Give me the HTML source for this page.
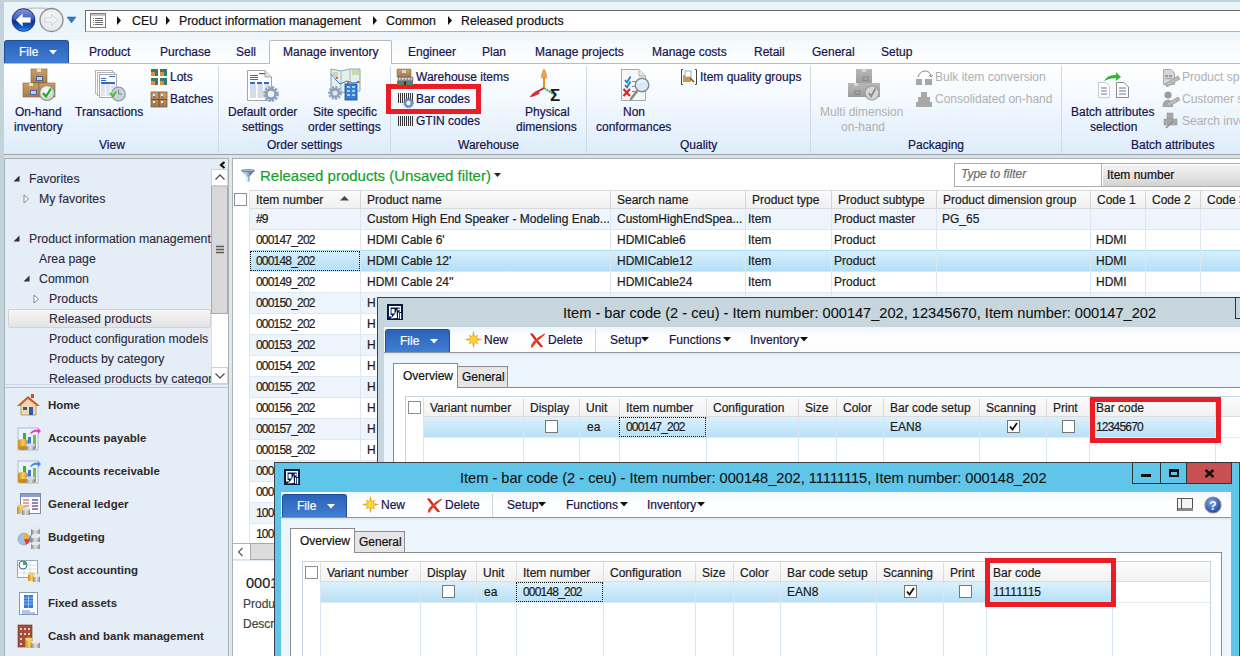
<!DOCTYPE html>
<html><head><meta charset="utf-8">
<style>
*{box-sizing:border-box}
html,body{margin:0;padding:0}
body{width:1240px;height:656px;overflow:hidden;position:relative;font-family:"Liberation Sans",sans-serif;font-size:12px;color:#1b1b1b;background:#fff}
.a{position:absolute}
.t{position:absolute;white-space:nowrap;line-height:14px;-webkit-text-stroke:0.2px currentColor}
.rt{color:#16144c}
.gr{color:#b0b0b0;-webkit-text-stroke:0}
.n{letter-spacing:-0.8px}
</style></head><body>

<!-- ============ TOP CHROME ============ -->
<div class="a" style="left:0;top:0;width:1240px;height:64px;background:linear-gradient(#eaf4fb 0,#eaf4fb 32px,#f3f9fd 40px,#ffffff 64px)"></div>
<div class="a" style="left:0;top:0;width:1240px;height:2px;background:#c3d3da"></div>
<div class="a" style="left:4px;top:33px;width:1236px;height:7px;background-color:#edf5fb;background-image:radial-gradient(circle,#f8fbfe 0.7px,transparent 1px);background-size:4px 3px"></div>
<div class="a" style="left:0;top:0;width:4px;height:656px;background:#c3d3da"></div>
<!-- back/forward -->
<svg class="a" style="left:0;top:0" width="85" height="38">
<defs>
<linearGradient id="bk" x1="0" y1="0" x2="0" y2="1"><stop offset="0" stop-color="#8496dc"/><stop offset="0.45" stop-color="#3e5cc4"/><stop offset="0.55" stop-color="#0a2c9c"/><stop offset="0.85" stop-color="#0e62cf"/><stop offset="1" stop-color="#28b6f0"/></linearGradient>
<radialGradient id="fw" cx="0.5" cy="0.4" r="0.6"><stop offset="0" stop-color="#fbfbfb"/><stop offset="1" stop-color="#e2e4e6"/></radialGradient>
</defs>
<path d="M17 10 Q37 6 57 10" fill="none" stroke="#c4c9cc" stroke-width="1.5"/>
<circle cx="23.5" cy="20" r="12.3" fill="#d8dde0"/>
<circle cx="23.5" cy="20" r="11.3" fill="url(#bk)" stroke="#1d2f7a" stroke-width="1"/>
<path d="M16 20 L22.5 13.8 L22.5 17.6 L30.5 17.6 L30.5 22.4 L22.5 22.4 L22.5 26.2 Z" fill="#fff" stroke="#e8e0d8" stroke-width="0.4" stroke-linejoin="round"/>
<circle cx="51.5" cy="20" r="11.5" fill="url(#fw)" stroke="#8a8e92" stroke-width="1.3"/>
<path d="M44.5 17.8 H51.5 V14.5 L58 20 L51.5 25.5 V22.2 H44.5 Z" fill="#f2f2f2" stroke="#d0d2d4" stroke-width="1" stroke-linejoin="round"/>
<path d="M67 17 H76 L71.5 23 Z" fill="#2f7fc0" stroke="#1f5f98" stroke-width="0.5"/>
</svg>
<!-- address box -->
<div class="a" style="left:85px;top:10px;width:1160px;height:22px;background:#fff;border:1px solid #6c6c6c;border-bottom-color:#b0b0b0;border-right:none"></div>
<svg class="a" style="left:90px;top:13px" width="17" height="16"><rect x="0.5" y="0.5" width="15" height="14" fill="#fff" stroke="#7c7c7c"/><rect x="1" y="1" width="14" height="2" fill="#c4c4c4"/><g fill="#6c6c6c"><rect x="3" y="5" width="1" height="1"/><rect x="5" y="5" width="8" height="1"/><rect x="3" y="7" width="1" height="1"/><rect x="5" y="7" width="8" height="1"/><rect x="3" y="9" width="1" height="1"/><rect x="5" y="9" width="8" height="1"/><rect x="3" y="11" width="1" height="1"/><rect x="5" y="11" width="8" height="1"/></g></svg>
<svg class="a" style="left:116px;top:16px" width="6" height="9"><path d="M1 0 L5 4.5 L1 9 Z" fill="#111"/></svg>
<div class="t" style="left:132px;top:14px;font-size:12.3px;color:#111">CEU</div>
<svg class="a" style="left:165px;top:16px" width="6" height="9"><path d="M1 0 L5 4.5 L1 9 Z" fill="#111"/></svg>
<div class="t" style="left:179px;top:14px;font-size:12.3px;color:#111">Product information management</div>
<svg class="a" style="left:372px;top:16px" width="6" height="9"><path d="M1 0 L5 4.5 L1 9 Z" fill="#111"/></svg>
<div class="t" style="left:386px;top:14px;font-size:12.3px;color:#111">Common</div>
<svg class="a" style="left:447px;top:16px" width="6" height="9"><path d="M1 0 L5 4.5 L1 9 Z" fill="#111"/></svg>
<div class="t" style="left:461px;top:14px;font-size:12.3px;color:#111">Released products</div>

<!-- ============ RIBBON TABS ============ -->
<div class="a" style="left:4px;top:40px;width:65px;height:24px;border-radius:3px 3px 0 0;background:linear-gradient(#2c62b6,#3f7fd4);border:1px solid #1f4f99;border-bottom:none"></div>
<div class="t" style="left:19px;top:45px;color:#fff">File</div>
<svg class="a" style="left:49px;top:50px" width="9" height="5"><path d="M0 0 L8 0 L4 4.5 Z" fill="#fff"/></svg>
<div class="a" style="left:4px;top:63px;width:1236px;height:1px;background:#b8bcc0"></div>
<div class="a" style="left:269px;top:40px;width:123px;height:24px;background:#fff;border:1px solid #b8bcc0;border-bottom:none;border-radius:2px 2px 0 0"></div>
<div class="t rt" style="left:89px;top:45px">Product</div>
<div class="t rt" style="left:160px;top:45px">Purchase</div>
<div class="t rt" style="left:236px;top:45px">Sell</div>
<div class="t rt" style="left:283px;top:45px">Manage inventory</div>
<div class="t rt" style="left:408px;top:45px">Engineer</div>
<div class="t rt" style="left:482px;top:45px">Plan</div>
<div class="t rt" style="left:535px;top:45px">Manage projects</div>
<div class="t rt" style="left:652px;top:45px">Manage costs</div>
<div class="t rt" style="left:754px;top:45px">Retail</div>
<div class="t rt" style="left:812px;top:45px">General</div>
<div class="t rt" style="left:881px;top:45px">Setup</div>

<!-- ============ RIBBON BODY ============ -->
<div class="a" style="left:4px;top:64px;width:1236px;height:90px;background:linear-gradient(#ffffff 0,#f3f9fe 40%,#ddecfa 100%)"></div>
<div class="a" style="left:4px;top:154px;width:1236px;height:1px;background:#9aa3a8"></div>
<div class="a" style="left:4px;top:155px;width:1236px;height:3px;background:#dde2e5"></div>
<!-- separators -->
<div class="a" style="left:218px;top:66px;width:1px;height:87px;background:#d0dae3"></div>
<div class="a" style="left:390px;top:66px;width:1px;height:87px;background:#d0dae3"></div>
<div class="a" style="left:586px;top:66px;width:1px;height:87px;background:#d0dae3"></div>
<div class="a" style="left:810px;top:66px;width:1px;height:87px;background:#d0dae3"></div>
<div class="a" style="left:1061px;top:66px;width:1px;height:87px;background:#d0dae3"></div>

<!-- ribbon labels -->
<div class="t rt" style="left:15px;top:105px">On-hand</div>
<div class="t rt" style="left:14px;top:120px">inventory</div>
<div class="t rt" style="left:75px;top:105px">Transactions</div>
<div class="t rt" style="left:170px;top:70px">Lots</div>
<div class="t rt" style="left:170px;top:92px">Batches</div>
<div class="t rt" style="left:99px;top:138px">View</div>
<div class="t rt" style="left:228px;top:105px">Default order</div>
<div class="t rt" style="left:242px;top:120px">settings</div>
<div class="t rt" style="left:313px;top:105px">Site specific</div>
<div class="t rt" style="left:308px;top:120px">order settings</div>
<div class="t rt" style="left:267px;top:138px">Order settings</div>
<div class="t rt" style="left:416px;top:70px">Warehouse items</div>
<div class="t rt" style="left:416px;top:92px">Bar codes</div>
<div class="t rt" style="left:416px;top:114px">GTIN codes</div>
<div class="t rt" style="left:525px;top:105px">Physical</div>
<div class="t rt" style="left:516px;top:120px">dimensions</div>
<div class="t rt" style="left:458px;top:138px">Warehouse</div>
<div class="t rt" style="left:623px;top:105px">Non</div>
<div class="t rt" style="left:596px;top:120px">conformances</div>
<div class="t rt" style="left:700px;top:70px">Item quality groups</div>
<div class="t rt" style="left:680px;top:138px">Quality</div>
<div class="t gr" style="left:820px;top:105px">Multi dimension</div>
<div class="t gr" style="left:841px;top:120px">on-hand</div>
<div class="t gr" style="left:935px;top:70px">Bulk item conversion</div>
<div class="t gr" style="left:935px;top:92px">Consolidated on-hand</div>
<div class="t rt" style="left:908px;top:138px">Packaging</div>
<div class="t rt" style="left:1071px;top:105px">Batch attributes</div>
<div class="t rt" style="left:1090px;top:120px">selection</div>
<div class="t gr" style="left:1182px;top:70px">Product specification</div>
<div class="t gr" style="left:1182px;top:92px">Customer specification</div>
<div class="t gr" style="left:1182px;top:114px">Search inventory</div>
<div class="t rt" style="left:1131px;top:138px">Batch attributes</div>
<!-- red box bar codes -->
<div class="a" style="left:386px;top:84px;width:95px;height:30px;border-style:solid;border-color:#ec1c24;border-width:5px 5px 5px 5px"></div>

<svg class="a" style="left:0;top:0" width="1240" height="160">
<defs>
<linearGradient id="box" x1="0" y1="0" x2="0" y2="1"><stop offset="0" stop-color="#c9a06a"/><stop offset="1" stop-color="#a97a40"/></linearGradient>
<linearGradient id="gbox" x1="0" y1="0" x2="0" y2="1"><stop offset="0" stop-color="#b8b8b8"/><stop offset="1" stop-color="#9c9c9c"/></linearGradient>
<radialGradient id="chk" cx="0.4" cy="0.35" r="0.7"><stop offset="0" stop-color="#ffffff"/><stop offset="1" stop-color="#c8c8c8"/></radialGradient>
<radialGradient id="gear" cx="0.5" cy="0.4" r="0.6"><stop offset="0" stop-color="#c3d3e6"/><stop offset="1" stop-color="#7d93b1"/></radialGradient>
</defs>
<!-- On-hand inventory -->
<g>
<rect x="31" y="69" width="16" height="14" fill="url(#box)" stroke="#8a6434" stroke-width="0.6"/>
<rect x="37" y="69" width="4" height="3" fill="#e8e0d4"/><rect x="36.5" y="76.5" width="6" height="4" fill="#c7cfe0" stroke="#4b66a0"/>
<rect x="23" y="83" width="16" height="14" fill="url(#box)" stroke="#8a6434" stroke-width="0.6"/>
<rect x="29" y="83" width="4" height="3" fill="#e8e0d4"/><rect x="30.5" y="90.5" width="6" height="4" fill="#c7cfe0" stroke="#4b66a0"/>
<rect x="39" y="83" width="16" height="14" fill="url(#box)" stroke="#8a6434" stroke-width="0.6"/>
<circle cx="47" cy="93" r="7.5" fill="url(#chk)" stroke="#8c8c8c" stroke-width="1.2"/>
<path d="M43 93 L46 96.5 L51 88.5" fill="none" stroke="#1fae1f" stroke-width="2.2"/>
</g>
<!-- Transactions -->
<g>
<rect x="95.5" y="70.5" width="17" height="23" fill="#fff" stroke="#b5b5b5"/>
<rect x="97.5" y="72.5" width="17" height="23" fill="#fff" stroke="#b5b5b5"/>
<rect x="99.5" y="74.5" width="17" height="23" fill="#fff" stroke="#a8a8a8"/>
<rect x="109" y="76" width="6" height="1" fill="#2a6ccf"/><rect x="101" y="78" width="5" height="1" fill="#2a6ccf"/><rect x="101" y="80" width="5" height="1" fill="#2a6ccf"/>
<rect x="101" y="82" width="14" height="2" fill="#2a6ccf"/><rect x="101" y="84" width="14" height="12" fill="#dde4ef"/>
<rect x="105" y="84" width="1" height="12" fill="#fff"/><rect x="110" y="84" width="1" height="12" fill="#fff"/>
<circle cx="118.5" cy="94" r="6.8" fill="#c8d3de" stroke="#8f9aa5" stroke-width="1.2"/>
<path d="M118.5 89.5 V94 H122" fill="none" stroke="#7b8793" stroke-width="1"/>
<path d="M110 93 L113 96.5 L116 91.5" fill="none" stroke="#52c23d" stroke-width="2.2"/>
</g>
<!-- Lots -->
<g>
<rect x="151" y="69" width="7" height="7" fill="#2f7b72"/><rect x="151" y="72" width="4" height="4" fill="#f4872a"/>
<rect x="160" y="69" width="7" height="7" fill="#2f7b72"/><rect x="160" y="72" width="4" height="4" fill="#f4872a"/>
<rect x="151" y="78" width="7" height="7" fill="#2f7b72"/><rect x="151" y="81" width="4" height="4" fill="#f4872a"/>
<rect x="160" y="78" width="7" height="7" fill="#2f7b72"/><rect x="160" y="81" width="4" height="4" fill="#f4872a"/>
</g>
<!-- Batches -->
<g>
<rect x="151" y="92" width="16" height="15" fill="url(#box)" stroke="#7f5d33" stroke-width="0.8"/>
<rect x="158.5" y="92" width="1" height="15" fill="#6d4f2a"/><rect x="151" y="99" width="16" height="1" fill="#6d4f2a"/>
<rect x="153" y="94" width="2" height="2" fill="#e8e8e8"/><rect x="161" y="94" width="2" height="2" fill="#e8e8e8"/>
<rect x="153" y="101" width="2" height="2" fill="#e8e8e8"/><rect x="161" y="101" width="2" height="2" fill="#e8e8e8"/>
<rect x="153" y="96.5" width="3" height="2" fill="#6a7ea8"/><rect x="161" y="96.5" width="3" height="2" fill="#6a7ea8"/>
<rect x="153" y="103.5" width="3" height="2" fill="#6a7ea8"/><rect x="161" y="103.5" width="3" height="2" fill="#6a7ea8"/>
</g>
<!-- Default order settings -->
<g>
<path d="M247.5 70.5 H265 L271.5 77 V100.5 H247.5 Z" fill="#fff" stroke="#a5a5a5"/>
<path d="M265 70.5 V77 H271.5" fill="#e0e0e0" stroke="#a5a5a5"/>
<rect x="259" y="73" width="6" height="1.2" fill="#2a6ccf"/><rect x="250" y="75" width="8" height="1" fill="#2a6ccf"/><rect x="250" y="77" width="8" height="1" fill="#2a6ccf"/><rect x="250" y="79" width="8" height="1" fill="#2a6ccf"/>
<rect x="250" y="82" width="5" height="2" fill="#2a6ccf"/><rect x="257" y="82" width="5" height="2" fill="#2a6ccf"/><rect x="264" y="82" width="5" height="2" fill="#2a6ccf"/><rect x="250" y="84" width="19" height="14" fill="#d5dde9"/>
<rect x="256" y="84" width="1.5" height="14" fill="#fff"/><rect x="263" y="84" width="1.5" height="14" fill="#fff"/>
<circle cx="271" cy="94" r="6.5" fill="none" stroke="#8ea3bd" stroke-width="3" stroke-dasharray="2.2 1.2"/>
<circle cx="271" cy="94" r="4.6" fill="#eef2f7" stroke="#8aa0bb" stroke-width="2.6"/>
</g>
<!-- Site specific -->
<g>
<path d="M331 69 L341 71 L350 69 L360 69 V91 L350 91 L341 93 L331 91 Z" fill="#e6efe6" stroke="#6a8ea8" stroke-width="0.8"/>
<path d="M341 71 V93 M350 69 V91" stroke="#9fb8c8" stroke-width="1"/>
<path d="M331 74 L336 80 L340 84 L347 81 L353 83 L360 82" fill="none" stroke="#2d7fd0" stroke-width="1"/>
<rect x="333" y="72" width="5" height="6" fill="#c9d9a6"/><rect x="352" y="70" width="7" height="5" fill="#c9d9a6"/>
<rect x="345" y="84" width="12" height="16" fill="#3a7ccd" stroke="#1d4f8f" stroke-width="0.8"/>
<g fill="#9fd0f3"><rect x="347" y="86" width="3" height="2"/><rect x="352" y="86" width="3" height="2"/><rect x="347" y="90" width="3" height="2"/><rect x="352" y="90" width="3" height="2"/><rect x="347" y="94" width="3" height="2"/><rect x="352" y="94" width="3" height="2"/></g>
<circle cx="335" cy="93" r="5.5" fill="none" stroke="#8ea3bd" stroke-width="3" stroke-dasharray="2 1.2"/>
<circle cx="335" cy="93" r="3.8" fill="#dfe6ee" stroke="#8aa0bb" stroke-width="2.4"/>
<circle cx="337" cy="78" r="1" fill="#e03030"/><circle cx="348" cy="83" r="1" fill="#e03030"/><circle cx="358" cy="82" r="1" fill="#e03030"/>
</g>
<!-- Warehouse items -->
<g>
<rect x="397" y="69" width="14" height="8" fill="url(#box)" stroke="#8a6434" stroke-width="0.5"/>
<rect x="402" y="70" width="4" height="3" fill="#d8d8e0"/>
<rect x="398" y="77" width="15" height="4" fill="#8f98a3" stroke="#5d6670" stroke-width="0.5"/>
<g fill="#e8eef4"><rect x="399" y="78" width="1.5" height="1.5"/><rect x="402" y="78" width="1.5" height="1.5"/><rect x="405" y="78" width="1.5" height="1.5"/><rect x="408" y="78" width="1.5" height="1.5"/><rect x="411" y="78" width="1" height="1.5"/></g>
<rect x="397" y="81" width="16" height="4" fill="#8d6b3d"/><rect x="399" y="81.5" width="3" height="3.5" fill="#3f8c8a"/><rect x="404" y="81.5" width="2" height="3.5" fill="#3a2a1a"/><rect x="408" y="81.5" width="3" height="3.5" fill="#3f8c8a"/>
</g>
<!-- Bar codes -->
<g fill="#333"><rect x="398" y="93" width="1" height="10"/><rect x="400" y="93" width="1" height="10"/><rect x="402" y="93" width="1" height="10"/><rect x="404" y="93" width="1" height="10"/><rect x="406" y="93" width="1" height="10"/><rect x="408" y="93" width="1" height="10"/><rect x="410" y="93" width="1" height="10"/><rect x="412" y="93" width="1" height="10"/></g>
<circle cx="408.5" cy="103" r="3.4" fill="#fff" stroke="#6f8fc0" stroke-width="2.4"/>
<circle cx="408.5" cy="103" r="4.6" fill="none" stroke="#6f8fc0" stroke-width="1.4" stroke-dasharray="1.3 1.1"/>
<!-- GTIN -->
<g fill="#333"><rect x="398" y="116" width="1" height="10"/><rect x="400" y="116" width="1" height="10"/><rect x="402" y="116" width="1" height="10"/><rect x="404" y="116" width="1" height="10"/><rect x="406" y="116" width="1" height="10"/><rect x="408" y="116" width="1" height="10"/><rect x="410" y="116" width="1" height="10"/><rect x="412" y="116" width="1" height="10"/></g>
<!-- Physical dimensions -->
<g>
<rect x="543" y="76" width="2" height="13" fill="#f08a2c"/>
<path d="M544 69 Q547 73 546.5 78 L541.5 78 Q541 73 544 69 Z" fill="#f5a04a" stroke="#d9762a" stroke-width="0.5"/>
<path d="M544 88 L537 92" stroke="#c82020" stroke-width="1.8"/>
<path d="M530 97 Q533 92 538 90.5 L539.5 93.5 Q535 96 530 97 Z" fill="#e03030" stroke="#b01818" stroke-width="0.4"/>
<path d="M544 88 L555 95" stroke="#2fb040" stroke-width="2" stroke-dasharray="2 0.8"/>
<text x="550" y="101" font-family="Liberation Sans" font-size="17" font-weight="bold" fill="#1a1a1a">Σ</text>
</g>
<!-- Non conformances -->
<g>
<path d="M621.5 69.5 H639 L645.5 76 V100.5 H621.5 Z" fill="#f7f7f7" stroke="#a8a8a8"/>
<path d="M639 69.5 V76 H645.5" fill="#e4e4e4" stroke="#b0b0b0"/>
<path d="M625 80 L627 82.5 L630.5 76.5" fill="none" stroke="#1f7fd0" stroke-width="1.8"/>
<path d="M625 85 L627 87.5 L630.5 81.5" fill="none" stroke="#1f7fd0" stroke-width="1.8"/>
<path d="M623.5 89 L630 96 M630 89 L623.5 96" stroke="#e01818" stroke-width="2"/>
<path d="M632 81.5 H636 M632 86.5 H636 M632 91.5 H635" stroke="#6a60a0" stroke-width="0.8"/>
<path d="M637 91 L631 99" stroke="#8a8a8a" stroke-width="2.6" stroke-linecap="round"/>
<circle cx="642" cy="85" r="6.8" fill="#dceaf8" stroke="#7f8c98" stroke-width="1.4"/>
<path d="M638 83 Q641 80 645 81" fill="none" stroke="#fff" stroke-width="1"/>
</g>
<!-- Item quality groups -->
<g>
<path d="M683 69.5 H681.5 V84.5 H683 M695 69.5 H696.5 V84.5 H695" fill="none" stroke="#444" stroke-width="1"/>
<rect x="683" y="75" width="8" height="7" fill="#d09a40"/>
<rect x="685" y="71" width="6" height="6" fill="#fff" stroke="#8898a8" stroke-width="0.8"/>
<path d="M690 78 L694 82" stroke="#7a5030" stroke-width="1.6"/>
</g>
<!-- Multi dimension (gray) -->
<g>
<rect x="856" y="69" width="16" height="14" fill="url(#gbox)"/>
<rect x="862" y="69" width="4" height="3" fill="#d8d8d8"/><rect x="863" y="77" width="5" height="3.5" fill="none" stroke="#888"/>
<rect x="848" y="83" width="16" height="14" fill="url(#gbox)"/>
<rect x="854" y="83" width="4" height="3" fill="#d8d8d8"/><rect x="855" y="91" width="5" height="3.5" fill="none" stroke="#888"/>
<rect x="864" y="83" width="16" height="14" fill="url(#gbox)"/>
<circle cx="872" cy="93" r="7" fill="#d6d6d6" stroke="#9a9a9a" stroke-width="1.2"/>
<path d="M869 93 L871 96.5 L875.5 88.5" fill="none" stroke="#8a8a8a" stroke-width="1.8"/>
</g>
<!-- Bulk item conversion -->
<g>
<path d="M918 77 Q920 71 925 71 Q930 71 931 76" fill="none" stroke="#8a8a8a" stroke-width="1"/>
<path d="M929 75 L931 77 L933 75" fill="none" stroke="#8a8a8a" stroke-width="1"/>
<rect x="916" y="79" width="6" height="6" fill="#a8a8a8"/><rect x="925" y="79" width="7" height="6" fill="#a8a8a8"/>
</g>
<!-- Consolidated on-hand -->
<g fill="#a8a8a8">
<rect x="921" y="92" width="6" height="5"/><rect x="918" y="97" width="12" height="5"/><rect x="916" y="102" width="16" height="5"/>
</g>
<!-- Batch attributes selection -->
<g>
<path d="M1098.5 82.5 H1106 L1109.5 86 V97.5 H1098.5 Z" fill="#fff" stroke="#9a9a9a" stroke-dasharray="1 1"/>
<path d="M1116.5 82.5 H1124 L1128.5 87 V97.5 H1116.5 Z" fill="#fff" stroke="#8a8a8a"/>
<path d="M1101 88 H1107 M1101 91 H1107 M1101 94 H1107 M1119 88 H1126 M1119 91 H1126 M1119 94 H1126" stroke="#6a6090" stroke-width="0.9"/>
<path d="M1104 81 Q1108 74 1116 75 L1116 72 L1121 77 L1116 81 L1116 78 Q1110 78 1104 81 Z" fill="#3cb43c"/>
</g>
<!-- right gray icons -->
<g>
<path d="M1163.5 69.5 H1171 L1174.5 73 V84.5 H1163.5 Z" fill="#d6d6d6" stroke="#a8a8a8"/>
<rect x="1165" y="75" width="3" height="2" fill="#9a9a9a"/><rect x="1169" y="75" width="3" height="2" fill="#9a9a9a"/><rect x="1165" y="78" width="7" height="1" fill="#a0a0a0"/>
<path d="M1165 84 L1178 76 L1180 79 L1167 87 Z" fill="#b4b4b4" stroke="#8e8e8e" stroke-width="0.6"/>
<path d="M1168 83 L1169 84.5 M1170.5 82 L1171.5 83.5 M1173 80.5 L1174 82 M1175.5 79 L1176.5 80.5" stroke="#e8e8e8" stroke-width="0.7"/>
<circle cx="1168" cy="95" r="3.6" fill="#9c9c9c"/><path d="M1162.5 107 Q1162 100 1168 99.5 Q1172 100 1173 103 L1173 107 Z" fill="#a8a8a8"/>
<path d="M1166 104 L1178 97 L1180 100 L1168 107 Z" fill="#b4b4b4" stroke="#8e8e8e" stroke-width="0.6"/>
<path d="M1169 103 L1170 104.5 M1171.5 101.5 L1172.5 103 M1174 100 L1175 101.5" stroke="#e8e8e8" stroke-width="0.7"/>
<rect x="1167" y="113" width="6" height="6" fill="#a8a8a8" stroke="#909090" stroke-width="0.5"/><rect x="1164" y="119" width="13" height="6" fill="#a8a8a8" stroke="#909090" stroke-width="0.5"/>
<path d="M1166 128 L1173 121" stroke="#8a8a8a" stroke-width="1.4"/>
</g>
</svg>


<!-- ============ NAV PANE ============ -->
<div class="a" style="left:4px;top:158px;width:224px;height:498px;background:#e5edf6"></div>
<div class="a" style="left:228px;top:158px;width:4px;height:498px;background:#d3dce1"></div>

<div class="a" style="left:4px;top:158px;width:224px;height:1px;background:#a9b1b5"></div>
<div class="a" style="left:4px;top:158px;width:1px;height:498px;background:#a9b4ba"></div>
<svg class="a" style="left:219px;top:161px" width="8" height="8"><path d="M5.5 1 L2 4 L5.5 7" fill="none" stroke="#111" stroke-width="2.2"/></svg>
<div class="a" style="left:8px;top:309px;width:203px;height:19px;background:linear-gradient(#f6f6f6,#e4e4e4);border:1px solid #d3d3d3;border-radius:2px"></div>
<div class="t" style="left:29px;top:172px;font-size:12.3px;color:#2a2a3c;-webkit-text-stroke:0.1px">Favorites</div>
<svg class="a" style="left:13px;top:175px" width="8" height="8"><path d="M6.5 0.5 V6.5 H0.5 Z" fill="#333"/></svg>
<div class="t" style="left:39px;top:192px;font-size:12.3px;color:#2a2a3c;-webkit-text-stroke:0.1px">My favorites</div>
<svg class="a" style="left:23px;top:194px" width="7" height="10"><path d="M1 1 L5.5 5 L1 9 Z" fill="#fff" stroke="#8a8a8a" stroke-width="1"/></svg>
<div class="t" style="left:29px;top:232px;font-size:12.3px;color:#2a2a3c;-webkit-text-stroke:0.1px">Product information management</div>
<svg class="a" style="left:13px;top:235px" width="8" height="8"><path d="M6.5 0.5 V6.5 H0.5 Z" fill="#333"/></svg>
<div class="t" style="left:39px;top:252px;font-size:12.3px;color:#2a2a3c;-webkit-text-stroke:0.1px">Area page</div>
<div class="t" style="left:39px;top:272px;font-size:12.3px;color:#2a2a3c;-webkit-text-stroke:0.1px">Common</div>
<svg class="a" style="left:23px;top:275px" width="8" height="8"><path d="M6.5 0.5 V6.5 H0.5 Z" fill="#333"/></svg>
<div class="t" style="left:49px;top:292px;font-size:12.3px;color:#2a2a3c;-webkit-text-stroke:0.1px">Products</div>
<svg class="a" style="left:33px;top:294px" width="7" height="10"><path d="M1 1 L5.5 5 L1 9 Z" fill="#fff" stroke="#8a8a8a" stroke-width="1"/></svg>
<div class="t" style="left:49px;top:312px;font-size:12.3px;color:#2a2a3c;-webkit-text-stroke:0.1px">Released products</div>
<div class="t" style="left:49px;top:332px;font-size:12.3px;color:#2a2a3c;-webkit-text-stroke:0.1px">Product configuration models</div>
<div class="t" style="left:49px;top:352px;font-size:12.3px;color:#2a2a3c;-webkit-text-stroke:0.1px">Products by category</div>
<div class="t" style="left:49px;top:372px;font-size:12.3px;color:#2a2a3c;-webkit-text-stroke:0.1px">Released products by category</div>
<div class="a" style="left:211px;top:169px;width:17px;height:215px;background:#fff;border-left:1px solid #e0e3e6"></div>
<div class="a" style="left:211px;top:169px;width:17px;height:17px;background:#fff;border:1px solid #cfd2d5"></div>
<svg class="a" style="left:214px;top:173px" width="12" height="8"><path d="M1.5 6.5 L6 2 L10.5 6.5" fill="none" stroke="#555" stroke-width="1.3"/></svg>
<div class="a" style="left:211px;top:186px;width:17px;height:128px;background:#d8d8d8;border:1px solid #a9a9a9;border-top-color:#c8c8c8"></div>
<svg class="a" style="left:215px;top:245px" width="10" height="10"><path d="M1 1.5 H9 M1 4.5 H9 M1 7.5 H9" stroke="#5a5a5a" stroke-width="1.5"/></svg>
<div class="a" style="left:211px;top:367px;width:17px;height:17px;background:#fff;border:1px solid #cfd2d5"></div>
<svg class="a" style="left:214px;top:372px" width="12" height="8"><path d="M1.5 1.5 L6 6 L10.5 1.5" fill="none" stroke="#555" stroke-width="1.3"/></svg>
<div class="a" style="left:228px;top:158px;width:1px;height:498px;background:#a9b1b5"></div>
<div class="a" style="left:229px;top:155px;width:3px;height:501px;background:#e3e7ea"></div>
<div class="a" style="left:5px;top:384px;width:223px;height:1px;background:#cfd6ea"></div>
<div class="a" style="left:5px;top:385px;width:223px;height:2px;background:#e5edf6"></div>
<div class="a" style="left:5px;top:387px;width:223px;height:1px;background:#b9c4cc"></div>
<div class="t" style="left:48px;top:398px;font-weight:bold;font-size:11.5px;color:#2e2a2c;-webkit-text-stroke:0">Home</div>
<div class="t" style="left:48px;top:431px;font-weight:bold;font-size:11.5px;color:#2e2a2c;-webkit-text-stroke:0">Accounts payable</div>
<div class="t" style="left:48px;top:464px;font-weight:bold;font-size:11.5px;color:#2e2a2c;-webkit-text-stroke:0">Accounts receivable</div>
<div class="t" style="left:48px;top:497px;font-weight:bold;font-size:11.5px;color:#2e2a2c;-webkit-text-stroke:0">General ledger</div>
<div class="t" style="left:48px;top:530px;font-weight:bold;font-size:11.5px;color:#2e2a2c;-webkit-text-stroke:0">Budgeting</div>
<div class="t" style="left:48px;top:563px;font-weight:bold;font-size:11.5px;color:#2e2a2c;-webkit-text-stroke:0">Cost accounting</div>
<div class="t" style="left:48px;top:596px;font-weight:bold;font-size:11.5px;color:#2e2a2c;-webkit-text-stroke:0">Fixed assets</div>
<div class="t" style="left:48px;top:629px;font-weight:bold;font-size:11.5px;color:#2e2a2c;-webkit-text-stroke:0">Cash and bank management</div>
<svg class="a" style="left:0;top:380px" width="60" height="276"><defs><linearGradient id="coin" x1="0" x2="1"><stop offset="0" stop-color="#c98a1a"/><stop offset="0.5" stop-color="#f6cf6a"/><stop offset="1" stop-color="#c98a1a"/></linearGradient><linearGradient id="scoin" x1="0" x2="1"><stop offset="0" stop-color="#8a8a8a"/><stop offset="0.5" stop-color="#e0e0e0"/><stop offset="1" stop-color="#8a8a8a"/></linearGradient></defs>
<g transform="translate(17,14)"><path d="M2 11 L11 3 L21 11 L19 11 L19 21 L4 21 L4 11 Z" fill="#f0d9b0" stroke="#b08a5a" stroke-width="0.8"/><path d="M0 12 L11 2 L23 12 L20 12 L11 5 L3 12 Z" fill="#d45a2a"/><rect x="14" y="0" width="3" height="4" fill="#c85028"/><rect x="12" y="13" width="4" height="8" fill="#2a5aa8"/><rect x="6" y="13" width="4" height="3" fill="#2a5aa8"/></g>
<g transform="translate(17,47)"><rect x="1" y="1" width="20" height="22" fill="#eef2f8" stroke="#9ab0cc" stroke-width="0.8"/><rect x="6" y="6" width="3" height="12" fill="#3ab03a"/><rect x="11" y="10" width="3" height="8" fill="#3a7ad0"/><rect x="16" y="8" width="3" height="14" fill="#6ac04a"/><ellipse cx="6" cy="14" rx="5" ry="2" fill="url(#coin)"/><rect x="1" y="14" width="10" height="7" fill="url(#coin)"/><ellipse cx="6" cy="21" rx="5" ry="2" fill="#c98a1a"/><rect x="9" y="18" width="9" height="5" fill="url(#scoin)"/><ellipse cx="13.5" cy="18" rx="4.5" ry="1.8" fill="#d8d8d8"/><path d="M13 6 Q17 1 21 3 L21 1 L24 4 L21 7 L21 5 Q17 4 14 7 Z" fill="#e040c0"/></g>
<g transform="translate(17,80)"><rect x="1" y="1" width="20" height="22" fill="#eef2f8" stroke="#9ab0cc" stroke-width="0.8"/><rect x="6" y="6" width="3" height="12" fill="#3ab03a"/><rect x="11" y="10" width="3" height="8" fill="#3a7ad0"/><rect x="16" y="8" width="3" height="14" fill="#6ac04a"/><ellipse cx="6" cy="14" rx="5" ry="2" fill="url(#coin)"/><rect x="1" y="14" width="10" height="7" fill="url(#coin)"/><ellipse cx="6" cy="21" rx="5" ry="2" fill="#c98a1a"/><rect x="9" y="18" width="9" height="5" fill="url(#scoin)"/><ellipse cx="13.5" cy="18" rx="4.5" ry="1.8" fill="#d8d8d8"/><path d="M13 6 Q17 1 21 3 L21 1 L24 4 L21 7 L21 5 Q17 4 14 7 Z" fill="#3a8ae0"/></g>
<g transform="translate(17,112)"><rect x="3.5" y="1.5" width="20" height="20" fill="#fff" stroke="#7a8aa8"/><rect x="4" y="2" width="19" height="3" fill="#8aa0c8"/><path d="M6 8 H12 M6 11 H12 M6 14 H12 M15 8 H21 M15 11 H21 M15 14 H21 M15 17 H21" stroke="#d04040" stroke-width="1"/><path d="M15 8 H21 M15 11 H21 M15 14 H21 M15 17 H21" stroke="#3a6ad0" stroke-width="1"/><rect x="0" y="14" width="8" height="8" fill="url(#coin)"/><ellipse cx="4" cy="14" rx="4" ry="1.6" fill="#f6cf6a"/><rect x="5" y="17" width="8" height="6" fill="url(#scoin)"/><ellipse cx="9" cy="17" rx="4" ry="1.6" fill="#e0e0e0"/></g>
<g transform="translate(17,146)"><circle cx="7" cy="13" r="6" fill="#a0c0e8" stroke="#7a9ac0" stroke-width="0.6"/><path d="M7 13 L7 7 A6 6 0 0 1 13 13 Z" fill="#f0b030"/><path d="M7 13 L13 13 A6 6 0 0 1 9 18.6 Z" fill="#e04040"/><path d="M12 13 L17 5 M12 13 L17 13 M12 13 L17 20" stroke="#3a8ad8" stroke-width="1.2"/><rect x="14" y="2" width="9" height="6" fill="url(#scoin)"/><ellipse cx="18.5" cy="2.5" rx="4.5" ry="1.8" fill="#e8e8e8"/><rect x="14" y="10" width="9" height="6" fill="url(#scoin)"/><ellipse cx="18.5" cy="10.5" rx="4.5" ry="1.8" fill="#e8e8e8"/><rect x="14" y="17" width="9" height="6" fill="url(#scoin)"/><ellipse cx="18.5" cy="17.5" rx="4.5" ry="1.8" fill="#e8e8e8"/></g>
<g transform="translate(17,179)"><rect x="0.5" y="1.5" width="20" height="17" fill="#fff" stroke="#9aa8b8"/><path d="M1 6 H20 M1 10 H20 M1 14 H20 M7 2 V18 M13 2 V18" stroke="#c8d8e8" stroke-width="0.8"/><circle cx="6" cy="6" r="4" fill="#fff" stroke="#3a6a9a" stroke-width="1"/><path d="M6 6 V2.5 A3.5 3.5 0 0 1 9.5 6 Z" fill="#40b040"/><rect x="11" y="15" width="7" height="7" fill="url(#coin)"/><ellipse cx="14.5" cy="15" rx="3.5" ry="1.4" fill="#f6cf6a"/><rect x="16" y="17" width="7" height="6" fill="url(#scoin)"/><ellipse cx="19.5" cy="17" rx="3.5" ry="1.4" fill="#e8e8e8"/></g>
<g transform="translate(17,212)"><rect x="2.5" y="0.5" width="18" height="22" fill="#fff" stroke="#8898b0"/><rect x="7" y="3" width="9" height="13" fill="#3a7ad0"/><path d="M7 6 H16 M7 9 H16 M7 12 H16 M11.5 3 V16" stroke="#a8d0f8" stroke-width="0.8"/><path d="M5 19 H13 M5 21 H18" stroke="#3a6ad0" stroke-width="0.8"/></g>
<g transform="translate(17,245)"><rect x="1" y="0" width="14" height="22" fill="#a0503a" stroke="#703020" stroke-width="0.6"/><g fill="#e8c8b8"><rect x="3" y="3" width="2" height="2"/><rect x="7" y="3" width="2" height="2"/><rect x="11" y="3" width="2" height="2"/><rect x="3" y="8" width="2" height="2"/><rect x="7" y="8" width="2" height="2"/><rect x="11" y="8" width="2" height="2"/><rect x="3" y="13" width="2" height="2"/><rect x="3" y="18" width="2" height="2"/></g><rect x="8" y="14" width="8" height="8" fill="url(#coin)"/><ellipse cx="12" cy="14" rx="4" ry="1.6" fill="#f6cf6a"/><rect x="14" y="17" width="9" height="6" fill="url(#scoin)"/><ellipse cx="18.5" cy="17" rx="4.5" ry="1.8" fill="#e8e8e8"/></g>
</svg>

<!-- ============ MAIN ============ -->
<div class="a" style="left:232px;top:158px;width:1008px;height:498px;background:#fff;border-top:1px solid #a9b1b5;border-left:1px solid #a9b1b5"></div>

<svg class="a" style="left:240px;top:168px" width="16" height="15"><defs><linearGradient id="fun" x1="0" y1="0" x2="1" y2="0"><stop offset="0" stop-color="#7f9bb8"/><stop offset="0.35" stop-color="#c0d4e6"/><stop offset="0.7" stop-color="#5d7d9c"/><stop offset="1" stop-color="#8aa6c0"/></linearGradient></defs><path d="M1 2.5 L15 2.5 L9.5 8.5 V13.5 L6.5 13.5 V8.5 Z" fill="url(#fun)"/><ellipse cx="8" cy="2.6" rx="7" ry="1.6" fill="#587898"/><ellipse cx="8" cy="2.4" rx="5.5" ry="0.9" fill="#9fb8d0"/><rect x="7" y="9" width="1.2" height="4" fill="#e6f0f8"/></svg>
<div class="t" style="left:260px;top:167px;font-size:15px;line-height:18px;color:#16a02a">Released products (Unsaved filter)</div>
<svg class="a" style="left:494px;top:173px" width="8" height="5"><path d="M0 0 H7 L3.5 4 Z" fill="#222"/></svg>
<div class="a" style="left:954px;top:163px;width:148px;height:24px;background:#fff;border:1px solid #abadb3"></div>
<div class="t" style="left:961px;top:167px;font-style:italic;color:#6d6d6d">Type to filter</div>
<div class="a" style="left:1101px;top:163px;width:150px;height:24px;background:linear-gradient(#f4f4f4,#e6e6e6 50%,#d2d2d2);border:1px solid #acacac;box-shadow:inset 1px 1px 0 #fff"></div>
<div class="t" style="left:1107px;top:168px;color:#111">Item number</div>
<div class="a" style="left:250px;top:190px;width:990px;height:19px;background:linear-gradient(#fbfbfb,#f0f0f0);border-top:1px solid #dadada;border-bottom:1px solid #dadada"></div>
<div class="a" style="left:234px;top:193px;width:13px;height:13px;background:#fff;border:1px solid #8e8f8f"></div>
<div class="a" style="left:250px;top:209px;width:990px;height:21px;background:#eef4fb;border-bottom:1px solid #dfe9f3"></div>
<div class="a" style="left:250px;top:230px;width:990px;height:21px;background:#ffffff;border-bottom:1px solid #dfe9f3"></div>
<div class="a" style="left:250px;top:250px;width:990px;height:22px;background:linear-gradient(#d8effb,#b4dff7);border-top:1px solid #a9dbf5;border-bottom:1px solid #d4eaf6"></div>
<div class="a" style="left:250px;top:272px;width:990px;height:21px;background:#ffffff;border-bottom:1px solid #dfe9f3"></div>
<div class="a" style="left:250px;top:293px;width:990px;height:21px;background:#eef4fb;border-bottom:1px solid #dfe9f3"></div>
<div class="a" style="left:250px;top:314px;width:990px;height:21px;background:#ffffff;border-bottom:1px solid #dfe9f3"></div>
<div class="a" style="left:250px;top:335px;width:990px;height:21px;background:#eef4fb;border-bottom:1px solid #dfe9f3"></div>
<div class="a" style="left:250px;top:356px;width:990px;height:21px;background:#ffffff;border-bottom:1px solid #dfe9f3"></div>
<div class="a" style="left:250px;top:377px;width:990px;height:21px;background:#eef4fb;border-bottom:1px solid #dfe9f3"></div>
<div class="a" style="left:250px;top:398px;width:990px;height:21px;background:#ffffff;border-bottom:1px solid #dfe9f3"></div>
<div class="a" style="left:250px;top:419px;width:990px;height:21px;background:#eef4fb;border-bottom:1px solid #dfe9f3"></div>
<div class="a" style="left:250px;top:440px;width:990px;height:21px;background:#ffffff;border-bottom:1px solid #dfe9f3"></div>
<div class="a" style="left:250px;top:461px;width:990px;height:21px;background:#eef4fb;border-bottom:1px solid #dfe9f3"></div>
<div class="a" style="left:250px;top:482px;width:990px;height:21px;background:#ffffff;border-bottom:1px solid #dfe9f3"></div>
<div class="a" style="left:250px;top:503px;width:990px;height:21px;background:#eef4fb;border-bottom:1px solid #dfe9f3"></div>
<div class="a" style="left:250px;top:524px;width:990px;height:21px;background:#ffffff;border-bottom:1px solid #dfe9f3"></div>
<div class="a" style="left:360px;top:191px;width:1px;height:17px;background:#d6d6d6"></div>
<div class="a" style="left:360px;top:209px;width:1px;height:335px;background:#dde7f1"></div>
<div class="a" style="left:610px;top:191px;width:1px;height:17px;background:#d6d6d6"></div>
<div class="a" style="left:610px;top:209px;width:1px;height:335px;background:#dde7f1"></div>
<div class="a" style="left:745px;top:191px;width:1px;height:17px;background:#d6d6d6"></div>
<div class="a" style="left:745px;top:209px;width:1px;height:335px;background:#dde7f1"></div>
<div class="a" style="left:831px;top:191px;width:1px;height:17px;background:#d6d6d6"></div>
<div class="a" style="left:831px;top:209px;width:1px;height:335px;background:#dde7f1"></div>
<div class="a" style="left:936px;top:191px;width:1px;height:17px;background:#d6d6d6"></div>
<div class="a" style="left:936px;top:209px;width:1px;height:335px;background:#dde7f1"></div>
<div class="a" style="left:1090px;top:191px;width:1px;height:17px;background:#d6d6d6"></div>
<div class="a" style="left:1090px;top:209px;width:1px;height:335px;background:#dde7f1"></div>
<div class="a" style="left:1145px;top:191px;width:1px;height:17px;background:#d6d6d6"></div>
<div class="a" style="left:1145px;top:209px;width:1px;height:335px;background:#dde7f1"></div>
<div class="a" style="left:1200px;top:191px;width:1px;height:17px;background:#d6d6d6"></div>
<div class="a" style="left:1200px;top:209px;width:1px;height:335px;background:#dde7f1"></div>
<div class="a" style="left:249px;top:190px;width:1px;height:354px;background:#dde7f1"></div>
<div class="t" style="left:256px;top:193px;color:#1b1b1b">Item number</div>
<div class="t" style="left:367px;top:193px;color:#1b1b1b">Product name</div>
<div class="t" style="left:617px;top:193px;color:#1b1b1b">Search name</div>
<div class="t" style="left:752px;top:193px;color:#1b1b1b">Product type</div>
<div class="t" style="left:838px;top:193px;color:#1b1b1b">Product subtype</div>
<div class="t" style="left:943px;top:193px;color:#1b1b1b">Product dimension group</div>
<div class="t" style="left:1097px;top:193px;color:#1b1b1b">Code 1</div>
<div class="t" style="left:1152px;top:193px;color:#1b1b1b">Code 2</div>
<div class="t" style="left:1207px;top:193px;color:#1b1b1b">Code 3</div>
<svg class="a" style="left:340px;top:196px" width="9" height="5"><path d="M0 4.5 L4.5 0 L9 4.5 Z" fill="#444"/></svg>
<div class="a" style="left:250px;top:251px;width:110px;height:20px;border:1px dotted #111"></div>
<div class="t n" style="left:256px;top:212px;width:103px;overflow:hidden;color:#1b1b1b">#9</div>
<div class="t" style="left:367px;top:212px;width:242px;overflow:hidden;color:#1b1b1b">Custom High End Speaker - Modeling Enab...</div>
<div class="t" style="left:617px;top:212px;width:127px;overflow:hidden;color:#1b1b1b">CustomHighEndSpea...</div>
<div class="t" style="left:748px;top:212px;width:82px;overflow:hidden;color:#1b1b1b">Item</div>
<div class="t" style="left:834px;top:212px;width:101px;overflow:hidden;color:#1b1b1b">Product master</div>
<div class="t" style="left:942px;top:212px;width:147px;overflow:hidden;color:#1b1b1b">PG_65</div>
<div class="t n" style="left:256px;top:233px;width:103px;overflow:hidden;color:#1b1b1b">000147_202</div>
<div class="t" style="left:367px;top:233px;width:242px;overflow:hidden;color:#1b1b1b">HDMI Cable 6'</div>
<div class="t" style="left:617px;top:233px;width:127px;overflow:hidden;color:#1b1b1b">HDMICable6</div>
<div class="t" style="left:748px;top:233px;width:82px;overflow:hidden;color:#1b1b1b">Item</div>
<div class="t" style="left:834px;top:233px;width:101px;overflow:hidden;color:#1b1b1b">Product</div>
<div class="t" style="left:1096px;top:233px;width:48px;overflow:hidden;color:#1b1b1b">HDMI</div>
<div class="t n" style="left:256px;top:254px;width:103px;overflow:hidden;color:#1b1b1b">000148_202</div>
<div class="t" style="left:367px;top:254px;width:242px;overflow:hidden;color:#1b1b1b">HDMI Cable 12'</div>
<div class="t" style="left:617px;top:254px;width:127px;overflow:hidden;color:#1b1b1b">HDMICable12</div>
<div class="t" style="left:748px;top:254px;width:82px;overflow:hidden;color:#1b1b1b">Item</div>
<div class="t" style="left:834px;top:254px;width:101px;overflow:hidden;color:#1b1b1b">Product</div>
<div class="t" style="left:1096px;top:254px;width:48px;overflow:hidden;color:#1b1b1b">HDMI</div>
<div class="t n" style="left:256px;top:275px;width:103px;overflow:hidden;color:#1b1b1b">000149_202</div>
<div class="t" style="left:367px;top:275px;width:242px;overflow:hidden;color:#1b1b1b">HDMI Cable 24''</div>
<div class="t" style="left:617px;top:275px;width:127px;overflow:hidden;color:#1b1b1b">HDMICable24</div>
<div class="t" style="left:748px;top:275px;width:82px;overflow:hidden;color:#1b1b1b">Item</div>
<div class="t" style="left:834px;top:275px;width:101px;overflow:hidden;color:#1b1b1b">Product</div>
<div class="t" style="left:1096px;top:275px;width:48px;overflow:hidden;color:#1b1b1b">HDMI</div>
<div class="t n" style="left:256px;top:296px;color:#1b1b1b">000150_202</div>
<div class="t" style="left:367px;top:296px;color:#1b1b1b">H</div>
<div class="t n" style="left:256px;top:317px;color:#1b1b1b">000152_202</div>
<div class="t" style="left:367px;top:317px;color:#1b1b1b">H</div>
<div class="t n" style="left:256px;top:338px;color:#1b1b1b">000153_202</div>
<div class="t" style="left:367px;top:338px;color:#1b1b1b">H</div>
<div class="t n" style="left:256px;top:359px;color:#1b1b1b">000154_202</div>
<div class="t" style="left:367px;top:359px;color:#1b1b1b">H</div>
<div class="t n" style="left:256px;top:380px;color:#1b1b1b">000155_202</div>
<div class="t" style="left:367px;top:380px;color:#1b1b1b">H</div>
<div class="t n" style="left:256px;top:401px;color:#1b1b1b">000156_202</div>
<div class="t" style="left:367px;top:401px;color:#1b1b1b">H</div>
<div class="t n" style="left:256px;top:422px;color:#1b1b1b">000157_202</div>
<div class="t" style="left:367px;top:422px;color:#1b1b1b">H</div>
<div class="t n" style="left:256px;top:443px;color:#1b1b1b">000158_202</div>
<div class="t" style="left:367px;top:443px;color:#1b1b1b">H</div>
<div class="t n" style="left:256px;top:464px;color:#1b1b1b">000159_202</div>
<div class="t" style="left:367px;top:464px;color:#1b1b1b">H</div>
<div class="t n" style="left:256px;top:485px;color:#1b1b1b">000160_202</div>
<div class="t" style="left:367px;top:485px;color:#1b1b1b">H</div>
<div class="t n" style="left:256px;top:506px;color:#1b1b1b">1000_202</div>
<div class="t" style="left:367px;top:506px;color:#1b1b1b">H</div>
<div class="t n" style="left:256px;top:527px;color:#1b1b1b">1001_202</div>
<div class="t" style="left:367px;top:527px;color:#1b1b1b">H</div>
<div class="a" style="left:233px;top:543px;width:1007px;height:17px;background:#fff;border-top:1px solid #b4b4b4;border-bottom:1px solid #d6e4ee"></div>
<div class="a" style="left:250px;top:543px;width:1000px;height:17px;background:#dcdcdc;border:1.5px solid #a9a9a9"></div>
<svg class="a" style="left:237px;top:547px" width="8" height="10"><path d="M5.5 1 L1.5 5 L5.5 9" fill="none" stroke="#555" stroke-width="1.1"/></svg>
<div class="a" style="left:233px;top:560px;width:1007px;height:96px;background:#fff;border-top:1px solid #dde8f0"></div>
<div class="t" style="left:246px;top:574px;font-size:14.5px;line-height:18px;color:#1b1b1b">0001</div>
<div class="t" style="left:243px;top:597px;color:#444">Product</div>
<div class="t" style="left:243px;top:617px;color:#444">Description</div>

<div class="a" style="left:377px;top:297px;width:966px;height:369px;overflow:hidden">
<div class="a" style="left:0;top:0;width:966px;height:369px;background:#c6d6dc;border:1px solid #3a4448"></div>
<svg class="a" style="left:10px;top:7px" width="16" height="16"><rect x="0" y="0" width="16" height="16" fill="#021848"/><path d="M2 2 H14 V8 H12.6 V3.6 H3.6 V11 H5 V12.5 H2 Z" fill="#fff"/><rect x="4.5" y="5" width="3" height="4.5" fill="#fff"/><path d="M3 14.5 Q8 12 9.5 5.5 L10 14 Z" fill="#fff"/><circle cx="11.5" cy="5.5" r="1" fill="#fff"/><rect x="11" y="8.5" width="1.2" height="6" fill="#fff"/><rect x="13" y="9" width="1.2" height="6" fill="#fff"/></svg>
<div class="t" style="left:186px;top:7px;font-size:14.6px;line-height:18px;color:#111;-webkit-text-stroke:0.1px">Item - bar code (2 - ceu) - Item number: 000147_202, 12345670, Item number: 000147_202</div>
<div class="a" style="left:858px;top:0;width:29px;height:22px;border:1px solid #2b3438;background:#c6d6dc"></div>
<div class="a" style="left:7px;top:30px;width:950px;height:26px;background:linear-gradient(#eef6fc,#ffffff 40%,#fafcfe);border-bottom:1px solid #8f959a"></div>
<div class="a" style="left:7px;top:56px;width:950px;height:369px;background:linear-gradient(#dfe4e8 0,#eef6fd 3px,#ecf5fd 100%)"></div>
<div class="a" style="left:8px;top:32px;width:65px;height:23px;border-radius:3px 3px 0 0;background:linear-gradient(#2c62b6,#3f7fd4);border:1px solid #1f4f99;border-bottom:none"></div>
<div class="t" style="left:23px;top:37px;color:#fff">File</div>
<svg class="a" style="left:53px;top:42px" width="9" height="5"><path d="M0 0 L8 0 L4 4.5 Z" fill="#fff"/></svg>
<svg class="a" style="left:88px;top:34px" width="17" height="17"><defs><radialGradient id="stg1" cx="0.5" cy="0.5" r="0.5"><stop offset="0" stop-color="#ffe040"/><stop offset="1" stop-color="#e8900a"/></radialGradient></defs><polygon points="8.50,0.50 9.65,5.73 12.88,4.12 11.27,7.35 16.50,8.50 11.27,9.65 12.88,12.88 9.65,11.27 8.50,16.50 7.35,11.27 4.12,12.88 5.73,9.65 0.50,8.50 5.73,7.35 4.12,4.12 7.35,5.73" fill="url(#stg1)" stroke="#e89a10" stroke-width="0.5"/><circle cx="8.5" cy="8.5" r="3" fill="#ffd836"/></svg>
<div class="t rt" style="left:107px;top:36px">New</div>
<svg class="a" style="left:151px;top:35px" width="18" height="17"><path d="M2 1.8 Q4 0.5 5.5 2.5 Q9.5 8 15 14.5 Q13.5 16 12 14.5 Q7 9 2 1.8 Z" fill="#d42a1a"/><path d="M16.5 1.5 Q17.5 2.5 16 3.5 Q9.5 8.5 5.5 14 Q4.5 16.5 3 15.5 Q2.5 13 5 10 Q10 4.5 16.5 1.5 Z" fill="#e23e28"/></svg>
<div class="t rt" style="left:171px;top:36px">Delete</div>
<div class="a" style="left:218px;top:32px;width:1px;height:23px;background:#d0d4d8"></div>
<div class="t rt" style="left:233px;top:36px">Setup</div>
<svg class="a" style="left:264px;top:40px" width="8" height="5"><path d="M0 0 H8 L4 4.5 Z" fill="#111"/></svg>
<div class="t rt" style="left:292px;top:36px">Functions</div>
<svg class="a" style="left:346px;top:40px" width="8" height="5"><path d="M0 0 H8 L4 4.5 Z" fill="#111"/></svg>
<div class="t rt" style="left:373px;top:36px">Inventory</div>
<svg class="a" style="left:423px;top:40px" width="8" height="5"><path d="M0 0 H8 L4 4.5 Z" fill="#111"/></svg>
<div class="a" style="left:16px;top:90px;width:932px;height:600px;background:#fff;border:1px solid #8c8c8c"></div>
<div class="a" style="left:80px;top:69px;width:51px;height:21px;background:#e6e6e6;border:1px solid #8c8c8c;border-bottom:none"></div>
<div class="t" style="left:85px;top:73px;color:#111">General</div>
<div class="a" style="left:16px;top:66px;width:65px;height:25px;background:#fff;border:1px solid #8c8c8c;border-bottom:none"></div>
<div class="t" style="left:26px;top:72px;color:#111">Overview</div>
<div class="a" style="left:28px;top:99px;width:909px;height:600px;background:#fff;border:1px solid #c3d3e0"></div>
<div class="a" style="left:31px;top:104px;width:13px;height:13px;background:#fff;border:1px solid #8e8f8f"></div>
<div class="a" style="left:47px;top:101px;width:889px;height:19px;background:linear-gradient(#fbfbfb,#f2f2f2);border-bottom:1px solid #dcdcdc"></div>
<div class="a" style="left:47px;top:120px;width:792px;height:20px;background:linear-gradient(#dcf1fc,#b7e0f7)"></div>
<div class="a" style="left:47px;top:140px;width:889px;height:1px;background:#e2ecf4"></div>
<div class="a" style="left:46px;top:101px;width:1px;height:19px;background:#dcdcdc"></div>
<div class="a" style="left:46px;top:120px;width:1px;height:600px;background:#d9e6f1"></div>
<div class="a" style="left:146px;top:101px;width:1px;height:19px;background:#dcdcdc"></div>
<div class="a" style="left:146px;top:120px;width:1px;height:600px;background:#d9e6f1"></div>
<div class="a" style="left:202px;top:101px;width:1px;height:19px;background:#dcdcdc"></div>
<div class="a" style="left:202px;top:120px;width:1px;height:600px;background:#d9e6f1"></div>
<div class="a" style="left:242px;top:101px;width:1px;height:19px;background:#dcdcdc"></div>
<div class="a" style="left:242px;top:120px;width:1px;height:600px;background:#d9e6f1"></div>
<div class="a" style="left:329px;top:101px;width:1px;height:19px;background:#dcdcdc"></div>
<div class="a" style="left:329px;top:120px;width:1px;height:600px;background:#d9e6f1"></div>
<div class="a" style="left:421px;top:101px;width:1px;height:19px;background:#dcdcdc"></div>
<div class="a" style="left:421px;top:120px;width:1px;height:600px;background:#d9e6f1"></div>
<div class="a" style="left:459px;top:101px;width:1px;height:19px;background:#dcdcdc"></div>
<div class="a" style="left:459px;top:120px;width:1px;height:600px;background:#d9e6f1"></div>
<div class="a" style="left:506px;top:101px;width:1px;height:19px;background:#dcdcdc"></div>
<div class="a" style="left:506px;top:120px;width:1px;height:600px;background:#d9e6f1"></div>
<div class="a" style="left:602px;top:101px;width:1px;height:19px;background:#dcdcdc"></div>
<div class="a" style="left:602px;top:120px;width:1px;height:600px;background:#d9e6f1"></div>
<div class="a" style="left:669px;top:101px;width:1px;height:19px;background:#dcdcdc"></div>
<div class="a" style="left:669px;top:120px;width:1px;height:600px;background:#d9e6f1"></div>
<div class="a" style="left:712px;top:101px;width:1px;height:19px;background:#dcdcdc"></div>
<div class="a" style="left:712px;top:120px;width:1px;height:600px;background:#d9e6f1"></div>
<div class="a" style="left:838px;top:101px;width:1px;height:19px;background:#dcdcdc"></div>
<div class="a" style="left:838px;top:120px;width:1px;height:600px;background:#d9e6f1"></div>
<div class="t" style="left:53px;top:104px;color:#1b1b1b">Variant number</div>
<div class="t" style="left:153px;top:104px;color:#1b1b1b">Display</div>
<div class="t" style="left:209px;top:104px;color:#1b1b1b">Unit</div>
<div class="t" style="left:249px;top:104px;color:#1b1b1b">Item number</div>
<div class="t" style="left:336px;top:104px;color:#1b1b1b">Configuration</div>
<div class="t" style="left:428px;top:104px;color:#1b1b1b">Size</div>
<div class="t" style="left:466px;top:104px;color:#1b1b1b">Color</div>
<div class="t" style="left:513px;top:104px;color:#1b1b1b">Bar code setup</div>
<div class="t" style="left:609px;top:104px;color:#1b1b1b">Scanning</div>
<div class="t" style="left:676px;top:104px;color:#1b1b1b">Print</div>
<div class="t" style="left:719px;top:104px;color:#1b1b1b">Bar code</div>
<div class="a" style="left:168px;top:123px;width:13px;height:13px;background:#fff;border:1px solid #777"></div>
<div class="t" style="left:210px;top:123px;color:#1b1b1b">ea</div>
<div class="a" style="left:242px;top:120px;width:87px;height:20px;border:1px dotted #111"></div>
<div class="t n" style="left:249px;top:123px;color:#1b1b1b">000147_202</div>
<div class="t" style="left:513px;top:123px;color:#1b1b1b">EAN8</div>
<div class="a" style="left:630px;top:123px;width:13px;height:13px;background:#fff;border:1px solid #777"></div>
<svg class="a" style="left:631px;top:124px" width="11" height="11"><path d="M2 5.5 L4.5 8.5 L9 2" fill="none" stroke="#111" stroke-width="1.8"/></svg>
<div class="a" style="left:685px;top:123px;width:13px;height:13px;background:#fff;border:1px solid #777"></div>
<div class="t n" style="left:719px;top:123px;color:#1b1b1b">12345670</div>
</div>
<div class="a" style="left:1090px;top:397px;width:131px;height:46px;border:5px solid #ec1c24"></div>
<div class="a" style="left:274px;top:462px;width:966px;height:204px;overflow:hidden">
<div class="a" style="left:0;top:0;width:966px;height:204px;background:#5fc5e9;border:1px solid #3a4448"></div>
<svg class="a" style="left:10px;top:7px" width="16" height="16"><rect x="0" y="0" width="16" height="16" fill="#021848"/><path d="M2 2 H14 V8 H12.6 V3.6 H3.6 V11 H5 V12.5 H2 Z" fill="#fff"/><rect x="4.5" y="5" width="3" height="4.5" fill="#fff"/><path d="M3 14.5 Q8 12 9.5 5.5 L10 14 Z" fill="#fff"/><circle cx="11.5" cy="5.5" r="1" fill="#fff"/><rect x="11" y="8.5" width="1.2" height="6" fill="#fff"/><rect x="13" y="9" width="1.2" height="6" fill="#fff"/></svg>
<div class="t" style="left:186px;top:7px;font-size:14.6px;line-height:18px;color:#111;-webkit-text-stroke:0.1px">Item - bar code (2 - ceu) - Item number: 000148_202, 11111115, Item number: 000148_202</div>
<div class="a" style="left:858px;top:0;width:29px;height:22px;border:1px solid #2b3438;background:#5fc5e9"></div>
<div class="a" style="left:867px;top:12px;width:10px;height:3px;background:#111"></div>
<div class="a" style="left:886px;top:0;width:27px;height:22px;border:1px solid #2b3438;background:#5fc5e9"></div>
<div class="a" style="left:895px;top:7px;width:10px;height:8px;border:2px solid #111;border-top-width:3px"></div>
<div class="a" style="left:912px;top:0;width:46px;height:22px;border:1px solid #2b3438;background:#c75050"></div>
<svg class="a" style="left:930px;top:7px" width="11" height="9"><path d="M1.5 1 L9.5 8 M9.5 1 L1.5 8" stroke="#111" stroke-width="2.4"/></svg>
<div class="a" style="left:7px;top:30px;width:950px;height:26px;background:linear-gradient(#eef6fc,#ffffff 40%,#fafcfe);border-bottom:1px solid #8f959a"></div>
<div class="a" style="left:7px;top:56px;width:950px;height:204px;background:linear-gradient(#dfe4e8 0,#eef6fd 3px,#ecf5fd 100%)"></div>
<div class="a" style="left:8px;top:32px;width:65px;height:23px;border-radius:3px 3px 0 0;background:linear-gradient(#2c62b6,#3f7fd4);border:1px solid #1f4f99;border-bottom:none"></div>
<div class="t" style="left:23px;top:37px;color:#fff">File</div>
<svg class="a" style="left:53px;top:42px" width="9" height="5"><path d="M0 0 L8 0 L4 4.5 Z" fill="#fff"/></svg>
<svg class="a" style="left:88px;top:34px" width="17" height="17"><defs><radialGradient id="stg2" cx="0.5" cy="0.5" r="0.5"><stop offset="0" stop-color="#ffe040"/><stop offset="1" stop-color="#e8900a"/></radialGradient></defs><polygon points="8.50,0.50 9.65,5.73 12.88,4.12 11.27,7.35 16.50,8.50 11.27,9.65 12.88,12.88 9.65,11.27 8.50,16.50 7.35,11.27 4.12,12.88 5.73,9.65 0.50,8.50 5.73,7.35 4.12,4.12 7.35,5.73" fill="url(#stg2)" stroke="#e89a10" stroke-width="0.5"/><circle cx="8.5" cy="8.5" r="3" fill="#ffd836"/></svg>
<div class="t rt" style="left:107px;top:36px">New</div>
<svg class="a" style="left:151px;top:35px" width="18" height="17"><path d="M2 1.8 Q4 0.5 5.5 2.5 Q9.5 8 15 14.5 Q13.5 16 12 14.5 Q7 9 2 1.8 Z" fill="#d42a1a"/><path d="M16.5 1.5 Q17.5 2.5 16 3.5 Q9.5 8.5 5.5 14 Q4.5 16.5 3 15.5 Q2.5 13 5 10 Q10 4.5 16.5 1.5 Z" fill="#e23e28"/></svg>
<div class="t rt" style="left:171px;top:36px">Delete</div>
<div class="a" style="left:218px;top:32px;width:1px;height:23px;background:#d0d4d8"></div>
<div class="t rt" style="left:233px;top:36px">Setup</div>
<svg class="a" style="left:264px;top:40px" width="8" height="5"><path d="M0 0 H8 L4 4.5 Z" fill="#111"/></svg>
<div class="t rt" style="left:292px;top:36px">Functions</div>
<svg class="a" style="left:346px;top:40px" width="8" height="5"><path d="M0 0 H8 L4 4.5 Z" fill="#111"/></svg>
<div class="t rt" style="left:373px;top:36px">Inventory</div>
<svg class="a" style="left:423px;top:40px" width="8" height="5"><path d="M0 0 H8 L4 4.5 Z" fill="#111"/></svg>
<svg class="a" style="left:903px;top:36px" width="17" height="14"><rect x="0.5" y="0.5" width="15" height="12" fill="#f4f4f4" stroke="#555"/><rect x="1" y="10" width="15" height="3" fill="#8a8a8a"/><rect x="4" y="1" width="1" height="10" fill="#555"/></svg>
<svg class="a" style="left:930px;top:34px" width="18" height="18"><defs><radialGradient id="hlp2" cx="0.4" cy="0.35" r="0.7"><stop offset="0" stop-color="#7fa8f0"/><stop offset="1" stop-color="#1a3f9e"/></radialGradient></defs><circle cx="9" cy="9" r="8" fill="url(#hlp2)" stroke="#8a8a8a" stroke-width="1.2"/><text x="9" y="13.5" text-anchor="middle" font-family="Liberation Sans" font-weight="bold" font-size="12" fill="#fff">?</text></svg>
<div class="a" style="left:16px;top:90px;width:932px;height:600px;background:#fff;border:1px solid #8c8c8c"></div>
<div class="a" style="left:80px;top:69px;width:51px;height:21px;background:#e6e6e6;border:1px solid #8c8c8c;border-bottom:none"></div>
<div class="t" style="left:85px;top:73px;color:#111">General</div>
<div class="a" style="left:16px;top:66px;width:65px;height:25px;background:#fff;border:1px solid #8c8c8c;border-bottom:none"></div>
<div class="t" style="left:26px;top:72px;color:#111">Overview</div>
<div class="a" style="left:28px;top:99px;width:909px;height:600px;background:#fff;border:1px solid #c3d3e0"></div>
<div class="a" style="left:31px;top:104px;width:13px;height:13px;background:#fff;border:1px solid #8e8f8f"></div>
<div class="a" style="left:47px;top:101px;width:889px;height:19px;background:linear-gradient(#fbfbfb,#f2f2f2);border-bottom:1px solid #dcdcdc"></div>
<div class="a" style="left:47px;top:120px;width:792px;height:20px;background:linear-gradient(#dcf1fc,#b7e0f7)"></div>
<div class="a" style="left:47px;top:140px;width:889px;height:1px;background:#e2ecf4"></div>
<div class="a" style="left:46px;top:101px;width:1px;height:19px;background:#dcdcdc"></div>
<div class="a" style="left:46px;top:120px;width:1px;height:600px;background:#d9e6f1"></div>
<div class="a" style="left:146px;top:101px;width:1px;height:19px;background:#dcdcdc"></div>
<div class="a" style="left:146px;top:120px;width:1px;height:600px;background:#d9e6f1"></div>
<div class="a" style="left:202px;top:101px;width:1px;height:19px;background:#dcdcdc"></div>
<div class="a" style="left:202px;top:120px;width:1px;height:600px;background:#d9e6f1"></div>
<div class="a" style="left:242px;top:101px;width:1px;height:19px;background:#dcdcdc"></div>
<div class="a" style="left:242px;top:120px;width:1px;height:600px;background:#d9e6f1"></div>
<div class="a" style="left:329px;top:101px;width:1px;height:19px;background:#dcdcdc"></div>
<div class="a" style="left:329px;top:120px;width:1px;height:600px;background:#d9e6f1"></div>
<div class="a" style="left:421px;top:101px;width:1px;height:19px;background:#dcdcdc"></div>
<div class="a" style="left:421px;top:120px;width:1px;height:600px;background:#d9e6f1"></div>
<div class="a" style="left:459px;top:101px;width:1px;height:19px;background:#dcdcdc"></div>
<div class="a" style="left:459px;top:120px;width:1px;height:600px;background:#d9e6f1"></div>
<div class="a" style="left:506px;top:101px;width:1px;height:19px;background:#dcdcdc"></div>
<div class="a" style="left:506px;top:120px;width:1px;height:600px;background:#d9e6f1"></div>
<div class="a" style="left:602px;top:101px;width:1px;height:19px;background:#dcdcdc"></div>
<div class="a" style="left:602px;top:120px;width:1px;height:600px;background:#d9e6f1"></div>
<div class="a" style="left:669px;top:101px;width:1px;height:19px;background:#dcdcdc"></div>
<div class="a" style="left:669px;top:120px;width:1px;height:600px;background:#d9e6f1"></div>
<div class="a" style="left:712px;top:101px;width:1px;height:19px;background:#dcdcdc"></div>
<div class="a" style="left:712px;top:120px;width:1px;height:600px;background:#d9e6f1"></div>
<div class="a" style="left:838px;top:101px;width:1px;height:19px;background:#dcdcdc"></div>
<div class="a" style="left:838px;top:120px;width:1px;height:600px;background:#d9e6f1"></div>
<div class="t" style="left:53px;top:104px;color:#1b1b1b">Variant number</div>
<div class="t" style="left:153px;top:104px;color:#1b1b1b">Display</div>
<div class="t" style="left:209px;top:104px;color:#1b1b1b">Unit</div>
<div class="t" style="left:249px;top:104px;color:#1b1b1b">Item number</div>
<div class="t" style="left:336px;top:104px;color:#1b1b1b">Configuration</div>
<div class="t" style="left:428px;top:104px;color:#1b1b1b">Size</div>
<div class="t" style="left:466px;top:104px;color:#1b1b1b">Color</div>
<div class="t" style="left:513px;top:104px;color:#1b1b1b">Bar code setup</div>
<div class="t" style="left:609px;top:104px;color:#1b1b1b">Scanning</div>
<div class="t" style="left:676px;top:104px;color:#1b1b1b">Print</div>
<div class="t" style="left:719px;top:104px;color:#1b1b1b">Bar code</div>
<div class="a" style="left:168px;top:123px;width:13px;height:13px;background:#fff;border:1px solid #777"></div>
<div class="t" style="left:210px;top:123px;color:#1b1b1b">ea</div>
<div class="a" style="left:242px;top:120px;width:87px;height:20px;border:1px dotted #111"></div>
<div class="t n" style="left:249px;top:123px;color:#1b1b1b">000148_202</div>
<div class="t" style="left:513px;top:123px;color:#1b1b1b">EAN8</div>
<div class="a" style="left:630px;top:123px;width:13px;height:13px;background:#fff;border:1px solid #777"></div>
<svg class="a" style="left:631px;top:124px" width="11" height="11"><path d="M2 5.5 L4.5 8.5 L9 2" fill="none" stroke="#111" stroke-width="1.8"/></svg>
<div class="a" style="left:685px;top:123px;width:13px;height:13px;background:#fff;border:1px solid #777"></div>
<div class="t" style="left:719px;top:123px;color:#1b1b1b">11111115</div>
</div>
<div class="a" style="left:985px;top:558px;width:131px;height:49px;border:5px solid #ec1c24"></div>

<!-- DIALOG2 -->

</body></html>
